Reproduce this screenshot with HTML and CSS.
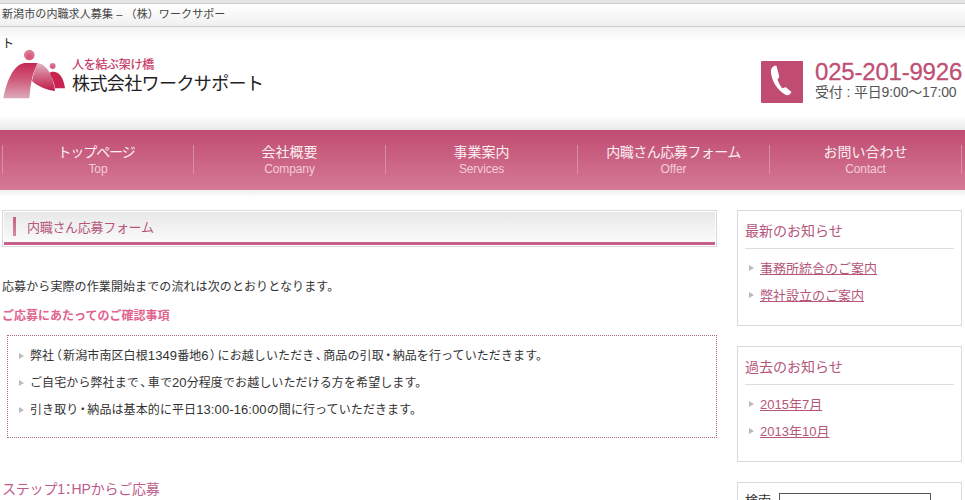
FILE: index.html
```html
<!DOCTYPE html>
<html lang="ja">
<head>
<meta charset="utf-8">
<title>新潟市の内職求人募集</title>
<link rel="stylesheet" href="styles.css">
</head>
<body>
<div class="topline"></div>
<h1 class="sitetitle">新潟市の内職求人募集 – （株）ワークサポー</h1>
<header class="header">
  <div class="stray">ト</div>
  <div class="logo">
    <svg class="mark" width="70" height="60" viewBox="0 0 210 180">
      <defs>
        <linearGradient id="g1" x1="0" y1="0" x2="0" y2="1">
          <stop offset="0" stop-color="#c42a55"/><stop offset=".45" stop-color="#cf5878"/><stop offset="1" stop-color="#dcaaba"/>
        </linearGradient>
        <linearGradient id="g2" x1="0" y1="0" x2="0" y2="1">
          <stop offset="0" stop-color="#e4b4c2"/><stop offset=".45" stop-color="#d26a88"/><stop offset="1" stop-color="#c01a48"/>
        </linearGradient>
        <radialGradient id="g3" cx=".5" cy=".7" r=".7">
          <stop offset="0" stop-color="#d84f74"/><stop offset="1" stop-color="#d98aa0"/>
        </radialGradient>
      </defs>
      <circle cx="88" cy="30" r="16" fill="url(#g3)"/>
      <circle cx="158" cy="63" r="9" fill="url(#g3)"/>
      <path d="M145 85C165 72 190 85 195 130L165 130C163 110 155 95 145 85z" fill="#c8234f"/>
      <path d="M10 160C20 110 38 62 72 54L115 54C100 75 92 110 88 160z" fill="url(#g1)"/>
      <path d="M112 54C142 58 160 95 165 138C140 136 110 122 96 108C101 85 106 68 112 54z" fill="url(#g2)"/>
    </svg>
    <div class="logotext">
      <div class="tagline">人を結ぶ架け橋</div>
      <div class="company">株式会社ワークサポート</div>
    </div>
  </div>
  <div class="contact">
    <div class="phoneicon">
      <svg width="42" height="42" viewBox="0 0 42 42"><path d="M13 5C11 6 9.500 8 10 12C11 20 16 29 24 33.500C27 35 29 34 30.500 31L24.500 26C23 27 22 27.500 21 27C19 24 17 21 16.500 18C18 17 18.500 16 18 14.500L15.500 5C15 4.500 14 4.500 13 5z" fill="#fff"/></svg>
    </div>
    <div class="contacttext">
      <div class="tel">025-201-9926</div>
      <div class="hours">受付 : 平日9:00〜17:00</div>
    </div>
  </div>
</header>
<nav class="nav">
  <a class="navitem"><span class="ja tight-lg">トップページ</span><span class="en">Top</span></a>
  <a class="navitem"><span class="ja">会社概要</span><span class="en">Company</span></a>
  <a class="navitem"><span class="ja">事業案内</span><span class="en">Services</span></a>
  <a class="navitem"><span class="ja tight-sm">内職さん応募フォーム</span><span class="en">Offer</span></a>
  <a class="navitem"><span class="ja">お問い合わせ</span><span class="en">Contact</span></a>
</nav>
<div class="navshadow"></div>
<div class="columns">
  <main class="main">
    <h2 class="pagetitle"><span class="pagetitle-inner">内職さん応募フォーム</span></h2>
    <p class="lead">応募から実際の作業開始までの流れは次のとおりとなります。</p>
    <h3 class="subhead">ご応募にあたってのご確認事項</h3>
    <ul class="notice">
      <li>弊社<span class="p">（</span>新潟市南区白根<span class="n">1349</span>番地<span class="n">6</span><span class="p">）</span>にお越しいただき<span class="p">、</span>商品の引取<span class="p">・</span>納品を行っていただきます。</li>
      <li>ご自宅から弊社まで<span class="p">、</span>車で<span class="n">20</span>分程度でお越しいただける方を希望します。</li>
      <li>引き取り<span class="p">・</span>納品は基本的に平日<span class="n">13:00-16:00</span>の間に行っていただきます。</li>
    </ul>
    <h3 class="step">ステップ1<span class="p">：</span>HPからご応募</h3>
  </main>
  <aside class="side">
    <section class="card">
      <h4>最新のお知らせ</h4>
      <ul><li><a href="#">事務所統合のご案内</a></li><li><a href="#">弊社設立のご案内</a></li></ul>
    </section>
    <section class="card">
      <h4>過去のお知らせ</h4>
      <ul><li><a href="#">2015年7月</a></li><li><a href="#">2013年10月</a></li></ul>
    </section>
    <section class="card search">
      <label>検索</label><input type="text">
    </section>
  </aside>
</div>
</body>
</html>
```
FILE: styles.css
```css
* { box-sizing: border-box; }
html, body { margin: 0; padding: 0; height: 500px; overflow: hidden; }
body { background: #fff; color: #333; font-family: "Liberation Sans", "Noto Sans CJK JP", sans-serif; font-size: 12px; }
ul { list-style: none; margin: 0; padding: 0; }
h1, h2, h3, h4, p { margin: 0; font-weight: normal; }
.p { font-feature-settings: "palt"; }

.topline { height: 4px; background: #e4e4e4; border-bottom: 1px solid #ccc; }
.sitetitle { height: 23px; padding-left: 2px; font-size: 11px; line-height: 21px; color: #444; background: linear-gradient(#fff, #f0f0f0); border-bottom: 1px solid #ccc; letter-spacing: .1px; }

.header { height: 103px; display: flex; justify-content: space-between; align-items: flex-start; position: relative; background: linear-gradient(#f2f2f2 0, #fff 14px, #fff 88px, #e9e9e9 103px); }
.stray { position: absolute; left: 2px; top: 10px; font-size: 12px; line-height: 14px; color: #222; }
.logo { display: flex; margin-top: 18px; }
.mark { display: block; }
.logotext { margin: 12px 0 0 2px; }
.tagline { font-size: 12px; line-height: 16px; color: #c8345f; letter-spacing: -.3px; -webkit-text-stroke: .2px #c8345f; }
.company { font-size: 18px; line-height: 24px; margin-top: -1px; color: #222; letter-spacing: -.6px; }
.contact { display: flex; margin: 34px 3px 0 0; }
.contacttext { width: 147px; }
.phoneicon { width: 42px; height: 42px; background: #c04c72; border-radius: 1px; margin-right: 12px; }
.tel { font-size: 24px; line-height: 24px; color: #bf4f74; margin-top: -1px; letter-spacing: -.2px; -webkit-text-stroke: .3px #bf4f74; white-space: nowrap; }
.hours { font-size: 14px; line-height: 17px; color: #555; letter-spacing: -.15px; white-space: nowrap; }

.nav { height: 60px; display: flex; padding: 15px 0 0 2px; background: linear-gradient(#c04c72, #d57a94); }
.navitem { width: 192px; height: 29px; border-left: 1px solid #d98ea6; display: flex; flex-direction: column; align-items: center; color: #fff; }
.navitem:first-child { width: 191px; }
.navitem:last-child { border-right: 1px solid #d98ea6; width: 193px; }
.ja { font-size: 14px; line-height: 15px; color: #fbeef2; }
.tight-lg { letter-spacing: -1.100px; margin-right: 4px; }
.tight-sm { letter-spacing: -.5px; }
.en { font-size: 12px; line-height: 15px; margin-top: 2px; color: #f3ccd8; letter-spacing: -.1px; }
.navshadow { height: 7px; background: linear-gradient(#eee, #fff); }

.columns { display: flex; align-items: flex-start; padding: 13px 3px 0 2px; gap: 20px; }
.main { width: 715px; flex: none; }
.side { flex: 1; min-width: 0; }

.pagetitle { height: 37px; border: 1px solid #d8d8d8; padding: 1px 1px 0; }
.pagetitle-inner { display: block; height: 33px; padding: 5px 0 0 23px; font-size: 13px; letter-spacing: -.3px; color: #b5567a; background: linear-gradient(#e8e8e8, #fafafa); border-bottom: 3px solid #c4608a; position: relative; line-height: 22px; }
.pagetitle-inner::before { content: ""; position: absolute; left: 9px; top: 5px; width: 3px; height: 19px; background: linear-gradient(#c4608a, #d58aa6); }

.lead { font-size: 12px; line-height: 18px; margin-top: 31px; color: #333; letter-spacing: .1px; }
.subhead { font-size: 12px; font-weight: bold; line-height: 18px; margin-top: 11px; color: #e0648e; }
.notice { margin: 10px 0 0 5px; height: 103px; width: 710px; border: 1px dotted #a9648a; padding: 7px 0 0 11px; }
.notice li { font-size: 12px; line-height: 27px; padding-left: 11px; position: relative; color: #333; letter-spacing: .1px; }
.notice .p { margin: 0 1.400px; }
.n { font-size: 13px; line-height: 0; }
.notice li::before, .card li::before { content: ""; position: absolute; left: 0; top: 10px; border-left: 5px solid #bbb; border-top: 3.500px solid transparent; border-bottom: 3.500px solid transparent; }
.step { font-size: 14px; line-height: 20px; margin-top: 41px; color: #bc5c88; letter-spacing: -.2px; }

.card { border: 1px solid #d8d8d8; width: 225px; height: 116px; padding: 0 7px; margin-bottom: 20px; }
.card h4 { font-size: 14px; line-height: 20px; color: #b5567a; padding: 10px 0 6px; height: 38px; border-bottom: 1px solid #ddd; }
.card ul { padding-top: 6px; }
.card li { position: relative; font-size: 13px; line-height: 27px; padding-left: 15px; }
.card li::before { left: 4px; }
.card a { color: #b5567a; text-decoration: underline; }
.search { display: flex; align-items: flex-start; padding-top: 10px; overflow: hidden; height: 60px; margin-bottom: 0; }
.search label { font-size: 13px; line-height: 16px; color: #333; width: 34px; }
.search input { width: 152px; height: 20px; border: 1px solid #555; border-radius: 0; background: #fff; padding: 0; margin: 0; }
```
